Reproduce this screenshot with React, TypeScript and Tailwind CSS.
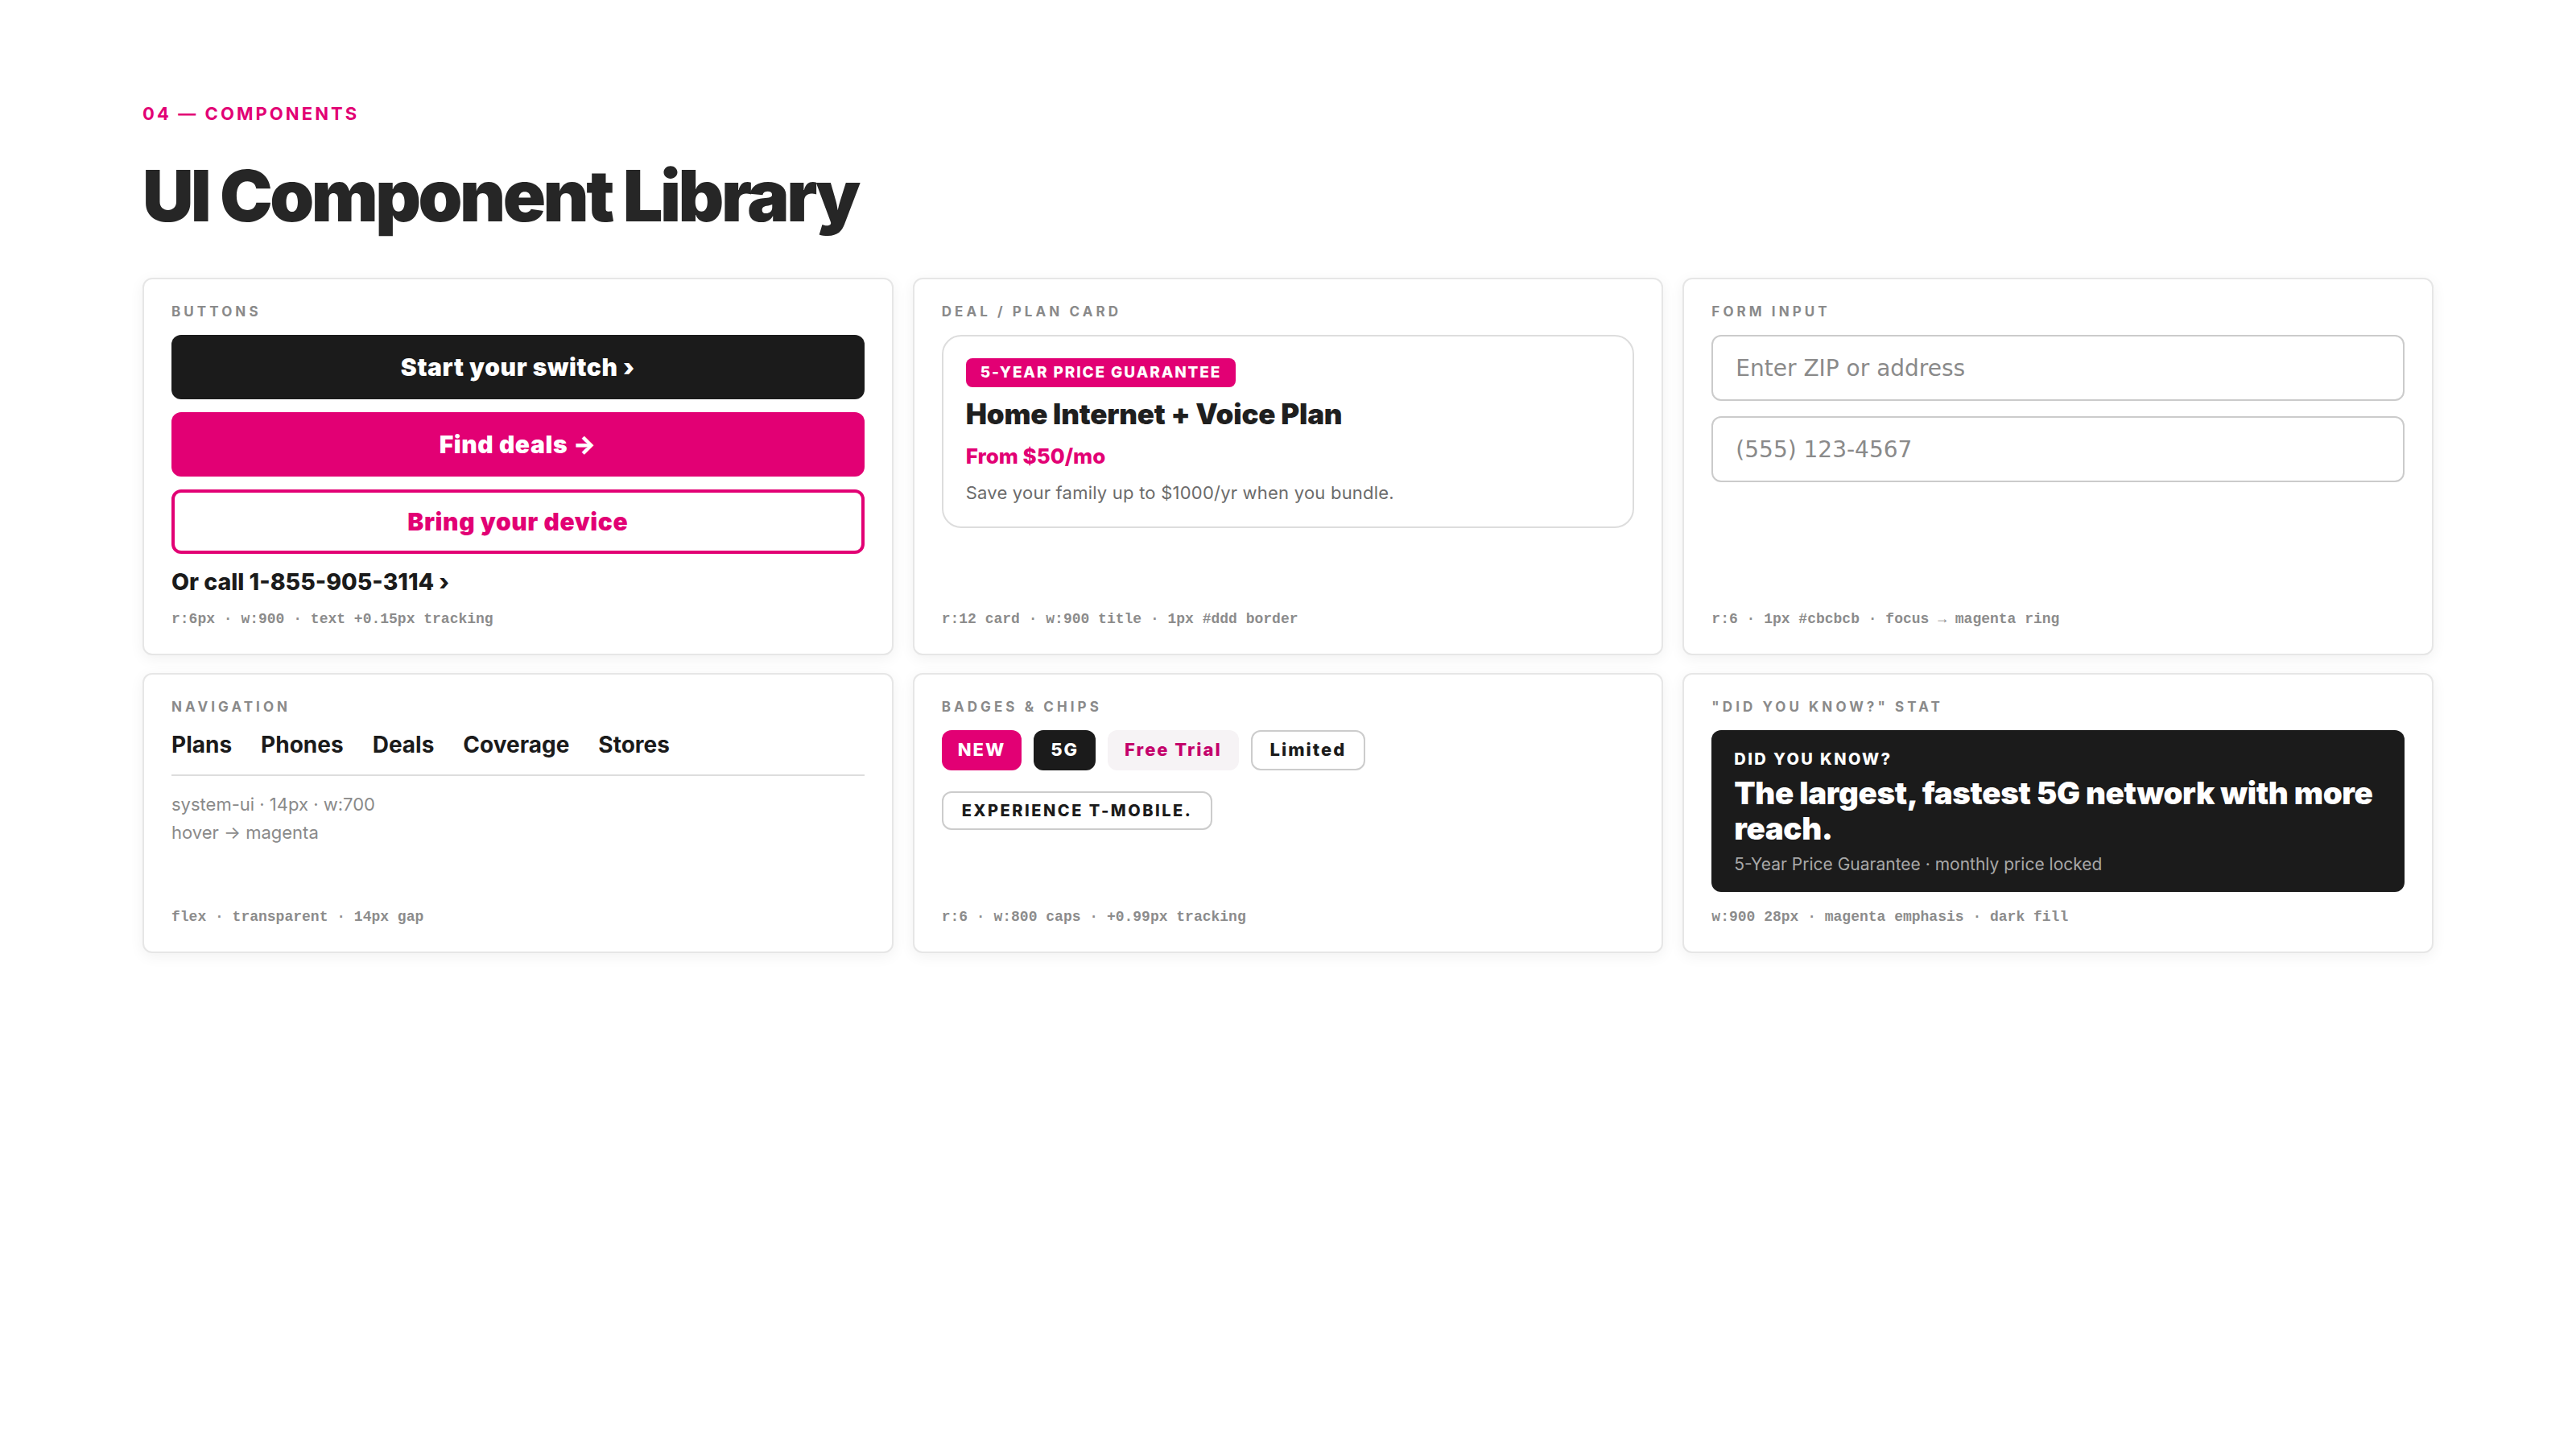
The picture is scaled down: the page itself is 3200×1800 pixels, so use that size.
import React from 'react';

const Card = ({ label, note, children }: { label: string; note: string; children: React.ReactNode }) => (
  <div className="flex flex-col rounded-[12px] border-2 border-[#e6e6e6] bg-white px-[34px] pt-[32px] pb-[34px] shadow-[0_4px_18px_rgba(0,0,0,0.06)]">
    <p className="text-[17px] leading-none font-bold tracking-[0.24em] text-[#8a8a8a] uppercase">{label}</p>
    <div className="mt-[20px] flex flex-col">{children}</div>
    <p className="mt-auto pt-[22px] font-['Liberation_Mono',monospace] text-[18px] leading-none font-bold text-[#8c8c8c]">{note}</p>
  </div>
);

const Buttons = () => (
  <>
    <button className="h-[80px] rounded-[12px] bg-[#1b1b1b] text-[30px] font-black tracking-[0.02em] text-white">Start your switch ›</button>
    <button className="mt-[16px] h-[80px] rounded-[12px] bg-[#e20074] text-[30px] font-black tracking-[0.02em] text-white">Find deals →</button>
    <button className="mt-[16px] h-[80px] rounded-[12px] border-4 border-[#e20074] bg-white text-[30px] font-black tracking-[0.02em] text-[#e20074]">Bring your device</button>
    <p className="mt-[21px] text-[28.5px] leading-none font-extrabold text-[#1b1b1b]">Or call 1-855-905-3114 ›</p>
  </>
);

const DealCard = () => (
  <div className="rounded-[24px] border-2 border-[#dddddd] px-[28px] pt-[27px] pb-[31px]">
    <span className="inline-block rounded-[8px] bg-[#e20074] px-[18px] py-[8px] text-[19px] leading-[20px] font-extrabold tracking-[0.1em] text-white">5-YEAR PRICE GUARANTEE</span>
    <h3 className="mt-[16px] text-[35px] leading-none font-black tracking-[-0.005em] text-[#1f1f1f]">Home Internet + Voice Plan</h3>
    <p className="mt-[22px] text-[26px] leading-none font-extrabold text-[#e20074]">From $50/mo</p>
    <p className="mt-[21px] text-[22px] leading-none tracking-[0.01em] text-[#6b6b6b]">Save your family up to $1000/yr when you bundle.</p>
  </div>
);

const inputCls =
  "h-[82px] w-full rounded-[12px] border-2 border-[#cbcbcb] px-[28px] font-['DejaVu_Sans',sans-serif] text-[28px] text-[#222] placeholder:text-[#8a8a8a] outline-none focus:border-[#e20074] focus:ring-4 focus:ring-[#e20074]/30";

const FormInputs = () => (
  <>
    <input placeholder="Enter ZIP or address" className={inputCls} />
    <input placeholder="(555) 123-4567" className={`mt-[19px] ${inputCls}`} />
  </>
);

const Navigation = () => (
  <>
    <nav className="flex gap-[36px] border-b-2 border-[#dddddd] pt-[4px] pb-[23px]">
      {['Plans', 'Phones', 'Deals', 'Coverage', 'Stores'].map(item => (
        <a key={item} className="text-[28px] leading-none font-bold text-[#1b1b1b] hover:text-[#e20074]">{item}</a>
      ))}
    </nav>
    <div className="mt-[18px] text-[22px] leading-[35px] text-[#8a8a8a]">
      <p>system-ui · 14px · w:700</p>
      <p>hover → magenta</p>
    </div>
  </>
);

const Badges = () => (
  <>
    <div className="flex gap-[15px]">
      <span className="flex h-[50px] items-center rounded-[12px] bg-[#e20074] px-[20px] text-[22px] font-extrabold tracking-[0.09em] text-white">NEW</span>
      <span className="flex h-[50px] items-center rounded-[12px] bg-[#1b1b1b] px-[21px] text-[22px] font-extrabold tracking-[0.09em] text-white">5G</span>
      <span className="flex h-[50px] items-center rounded-[12px] bg-[#f6f3f5] px-[21px] text-[22px] font-extrabold tracking-[0.09em] text-[#c4006b]">Free Trial</span>
      <span className="flex h-[50px] items-center rounded-[12px] border-2 border-[#cccccc] bg-white px-[22px] text-[22px] font-extrabold tracking-[0.09em] text-[#1b1b1b]">Limited</span>
    </div>
    <div className="mt-[26px] flex">
      <span className="flex h-[48px] items-center rounded-[12px] border-2 border-[#cccccc] px-[23px] text-[20px] font-extrabold tracking-[0.125em] text-[#1b1b1b]">EXPERIENCE T-MOBILE.</span>
    </div>
  </>
);

const Stat = () => (
  <div className="rounded-[12px] bg-[#1b1b1b] px-[28px] pt-[26px] pb-[24px]">
    <p className="text-[20px] leading-none font-extrabold tracking-[0.12em] text-white">DID YOU KNOW?</p>
    <p className="mt-[10px] text-[38.5px] leading-[44px] font-black tracking-[-0.01em] text-white">The largest, fastest 5G network with more reach.</p>
    <p className="mt-[12px] text-[21px] leading-none text-[#a8a8a8]">5-Year Price Guarantee · monthly price locked</p>
  </div>
);

export default function App() {
  return (
    <div className="min-h-screen bg-white px-[177px] pt-[130px] pb-[120px] font-[Inter,sans-serif] text-[#222]">
      <p className="text-[22px] leading-none font-bold tracking-[0.14em] text-[#e20074]">04 — COMPONENTS</p>
      <h1 className="mt-[47px] text-[88px] leading-none font-black tracking-[-0.04em] text-[#262626]">UI Component Library</h1>

      <div className="mt-[58px] grid grid-cols-3 gap-x-[24px] gap-y-[22px]">
        <Card label="Buttons" note="r:6px · w:900 · text +0.15px tracking"><Buttons /></Card>
        <Card label="Deal / Plan Card" note="r:12 card · w:900 title · 1px #ddd border"><DealCard /></Card>
        <Card label="Form Input" note="r:6 · 1px #cbcbcb · focus → magenta ring"><FormInputs /></Card>
        <Card label="Navigation" note="flex · transparent · 14px gap"><Navigation /></Card>
        <Card label="Badges & Chips" note="r:6 · w:800 caps · +0.99px tracking"><Badges /></Card>
        <Card label={'"Did you know?" Stat'} note="w:900 28px · magenta emphasis · dark fill"><Stat /></Card>
      </div>
    </div>
  );
}
